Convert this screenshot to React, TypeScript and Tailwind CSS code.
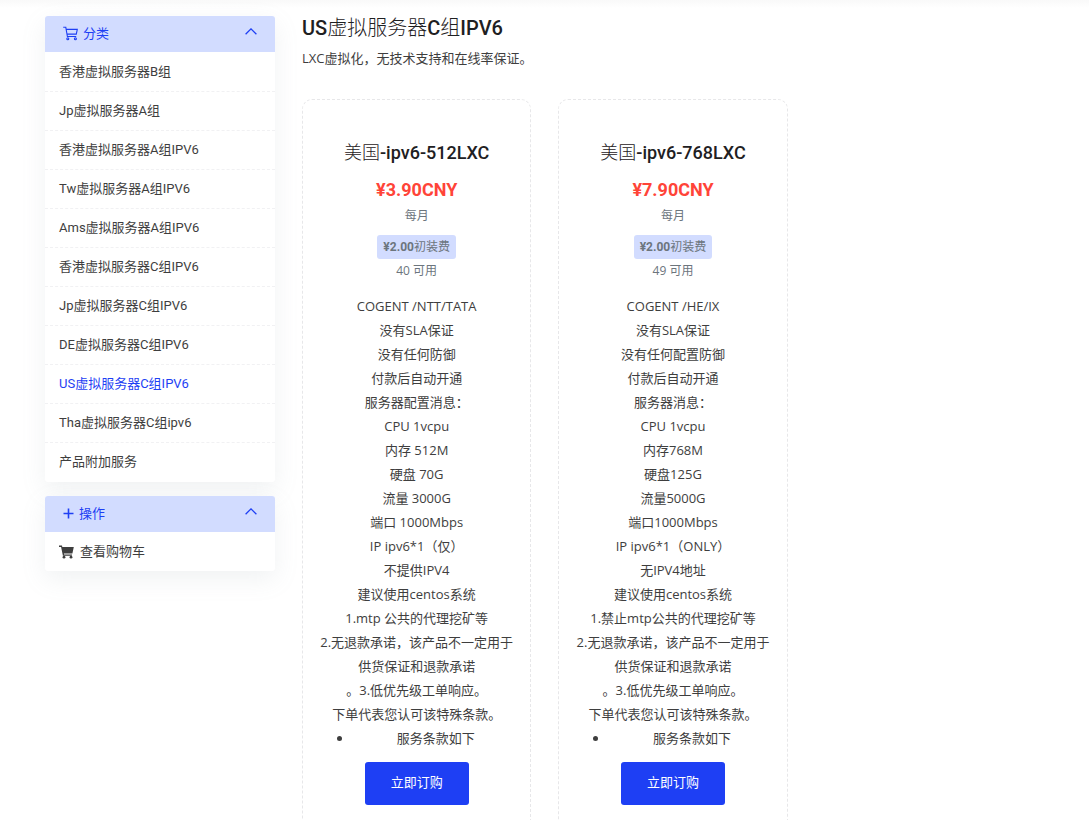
import { useState } from 'react'
import type { ReactNode } from 'react'

const categories = [
  '香港虚拟服务器B组',
  'Jp虚拟服务器A组',
  '香港虚拟服务器A组IPV6',
  'Tw虚拟服务器A组IPV6',
  'Ams虚拟服务器A组IPV6',
  '香港虚拟服务器C组IPV6',
  'Jp虚拟服务器C组IPV6',
  'DE虚拟服务器C组IPV6',
  'US虚拟服务器C组IPV6',
  'Tha虚拟服务器C组ipv6',
  '产品附加服务',
]

const activeCategory = 'US虚拟服务器C组IPV6'

const commonTerms = [
  '2.无退款承诺，该产品不一定用于供货保证和退款承诺',
  '。3.低优先级工单响应。',
  '下单代表您认可该特殊条款。',
]

const products = [
  {
    region: '美国',
    model: '-ipv6-512LXC',
    price: '¥3.90CNY',
    setup: '¥2.00',
    stock: 40,
    features: [
      'COGENT /NTT/TATA',
      '没有SLA保证',
      '没有任何防御',
      '付款后自动开通',
      '服务器配置消息：',
      'CPU 1vcpu',
      '内存 512M',
      '硬盘 70G',
      '流量 3000G',
      '端口 1000Mbps',
      'IP ipv6*1（仅）',
      '不提供IPV4',
      '建议使用centos系统',
      '1.mtp 公共的代理挖矿等',
      ...commonTerms,
    ],
  },
  {
    region: '美国',
    model: '-ipv6-768LXC',
    price: '¥7.90CNY',
    setup: '¥2.00',
    stock: 49,
    features: [
      'COGENT /HE/IX',
      '没有SLA保证',
      '没有任何配置防御',
      '付款后自动开通',
      '服务器消息：',
      'CPU 1vcpu',
      '内存768M',
      '硬盘125G',
      '流量5000G',
      '端口1000Mbps',
      'IP ipv6*1（ONLY）',
      '无IPV4地址',
      '建议使用centos系统',
      '1.禁止mtp公共的代理挖矿等',
      ...commonTerms,
    ],
  },
]

function CartOutline() {
  return (
    <svg className="h-[15px] w-[15px]" viewBox="0 0 15 15" fill="none" stroke="currentColor" strokeWidth="1.1">
      <path d="M0.2 1.3h2.6l1.6 9.2h8.8M3.2 3.4h11.1l-1 4.7H4" />
      <circle cx="4.8" cy="12.8" r="1" />
      <circle cx="12.4" cy="12.8" r="1" />
    </svg>
  )
}

function CartSolid() {
  return (
    <svg className="h-[14px] w-[15px]" viewBox="0 0 15 14" fill="currentColor">
      <path d="M0 0.5h3l0.3 1.4H14.8l-1.4 6.6H4.9l0.2 1h8l-0.3 1.3H3.9L2.1 1.9H0z" />
      <circle cx="5" cy="12.2" r="1.4" />
      <circle cx="12" cy="12.2" r="1.4" />
    </svg>
  )
}

function Plus() {
  return (
    <svg className="h-[11px] w-[11px]" viewBox="0 0 11 11" stroke="currentColor" strokeWidth="1.6">
      <path d="M5.5 0.5v10M0.5 5.5h10" />
    </svg>
  )
}

function Chevron({ open }: { open: boolean }) {
  return (
    <svg
      className={open ? 'mb-[5px] h-[7px] w-3' : 'mb-[5px] h-[7px] w-3 rotate-180'}
      viewBox="0 0 12 7"
      fill="none"
      stroke="currentColor"
      strokeWidth="1.3"
    >
      <path d="M0.6 6.3L6 0.9l5.4 5.4" />
    </svg>
  )
}

function Panel({ icon, title, children }: { icon: ReactNode; title: string; children: ReactNode }) {
  const [open, setOpen] = useState(true)

  return (
    <section className="rounded-[3px] bg-white shadow-[0_8px_24px_rgba(140,152,164,0.13)]">
      <button
        type="button"
        aria-expanded={open}
        onClick={() => setOpen(!open)}
        className="flex h-9 w-full items-center gap-[5px] rounded-t-[3px] bg-[#d2dcff] px-[18px] pb-px text-[13px] text-[#1e3ff4]"
      >
        {icon}
        <span className="flex-1 text-left">{title}</span>
        <Chevron open={open} />
      </button>
      {open && <div className="pt-px">{children}</div>}
    </section>
  )
}

function ProductCard({ product }: { product: (typeof products)[number] }) {
  return (
    <article className="flex flex-col items-center rounded-[10px] border border-dashed border-[#e7e7e9] px-3 py-10 text-center">
      <h2 className="text-[18px] leading-[26px] font-medium text-[#1e2022]">
        <span className="font-light">{product.region}</span>
        {product.model}
      </h2>
      <p className="mt-3 font-['Roboto'] text-[18px] leading-6 font-bold text-[#ff4438]">{product.price}</p>
      <p className="mt-1 text-[12px] leading-5 text-[#6c757d]">每月</p>
      <p className="mt-[9px] rounded-[3px] bg-[#d2dcff] px-[6px] text-[12px] leading-6 text-[#6c757d]">
        <b className="font-bold">{product.setup}</b>
        初装费
      </p>
      <p className="mt-[2px] font-['Open_Sans','Noto_Sans_CJK_SC',sans-serif] text-[12px] leading-5 text-[#6c757d]">
        {product.stock} 可用
      </p>
      <div className="mt-[13px] w-full font-['Open_Sans','Noto_Sans_CJK_SC',sans-serif] text-[13px] leading-6 text-[#3e3e3e]">
        {product.features.map((line) => (
          <p key={line}>{line}</p>
        ))}
        <ul className="list-disc pl-[38px]">
          <li>服务条款如下</li>
        </ul>
      </div>
      <button type="button" className="mt-3 h-[43px] rounded-[3px] bg-[#1e3ff4] px-[26px] pb-[2px] text-[13px] text-white">
        立即订购
      </button>
    </article>
  )
}

export default function App() {
  return (
    <div lang="zh-CN" className="min-h-screen bg-white font-['Roboto','Noto_Sans_CJK_SC',sans-serif] text-[#3e3e3e]">
      <div className="h-2 bg-linear-to-b from-[#f9f9f9] to-white" />
      <div className="grid grid-cols-[230px_1fr] items-start gap-[27px] px-[45px] pt-2">
        <aside className="flex flex-col gap-[14px]">
          <Panel icon={<CartOutline />} title="分类">
            <nav className="text-[13px] leading-[38px]">
              {categories.map((name) => (
                <a
                  key={name}
                  href="#"
                  className={
                    name === activeCategory
                      ? 'block border-b border-dashed border-[#f1f1f3] px-[14px] text-[#1e3ff4] last:border-transparent'
                      : 'block border-b border-dashed border-[#f1f1f3] px-[14px] last:border-transparent'
                  }
                >
                  {name}
                </a>
              ))}
            </nav>
          </Panel>
          <Panel icon={<Plus />} title="操作">
            <a href="#" className="flex items-center gap-[6px] px-[14px] text-[13px] leading-[38px]">
              <CartSolid />
              查看购物车
            </a>
          </Panel>
        </aside>

        <main>
          <h1 className="text-[20px] leading-6 font-medium text-[#1e2022]">
            US<span className="font-light">虚拟服务器</span>C<span className="font-light">组</span>IPV6
          </h1>
          <p className="mt-2 font-['Open_Sans','Noto_Sans_CJK_SC',sans-serif] text-[13px] leading-5">
            LXC虚拟化，无技术支持和在线率保证。
          </p>
          <div className="mt-[31px] grid grid-cols-3 gap-[27px]">
            {products.map((product) => (
              <ProductCard key={product.model} product={product} />
            ))}
          </div>
        </main>
      </div>
    </div>
  )
}
